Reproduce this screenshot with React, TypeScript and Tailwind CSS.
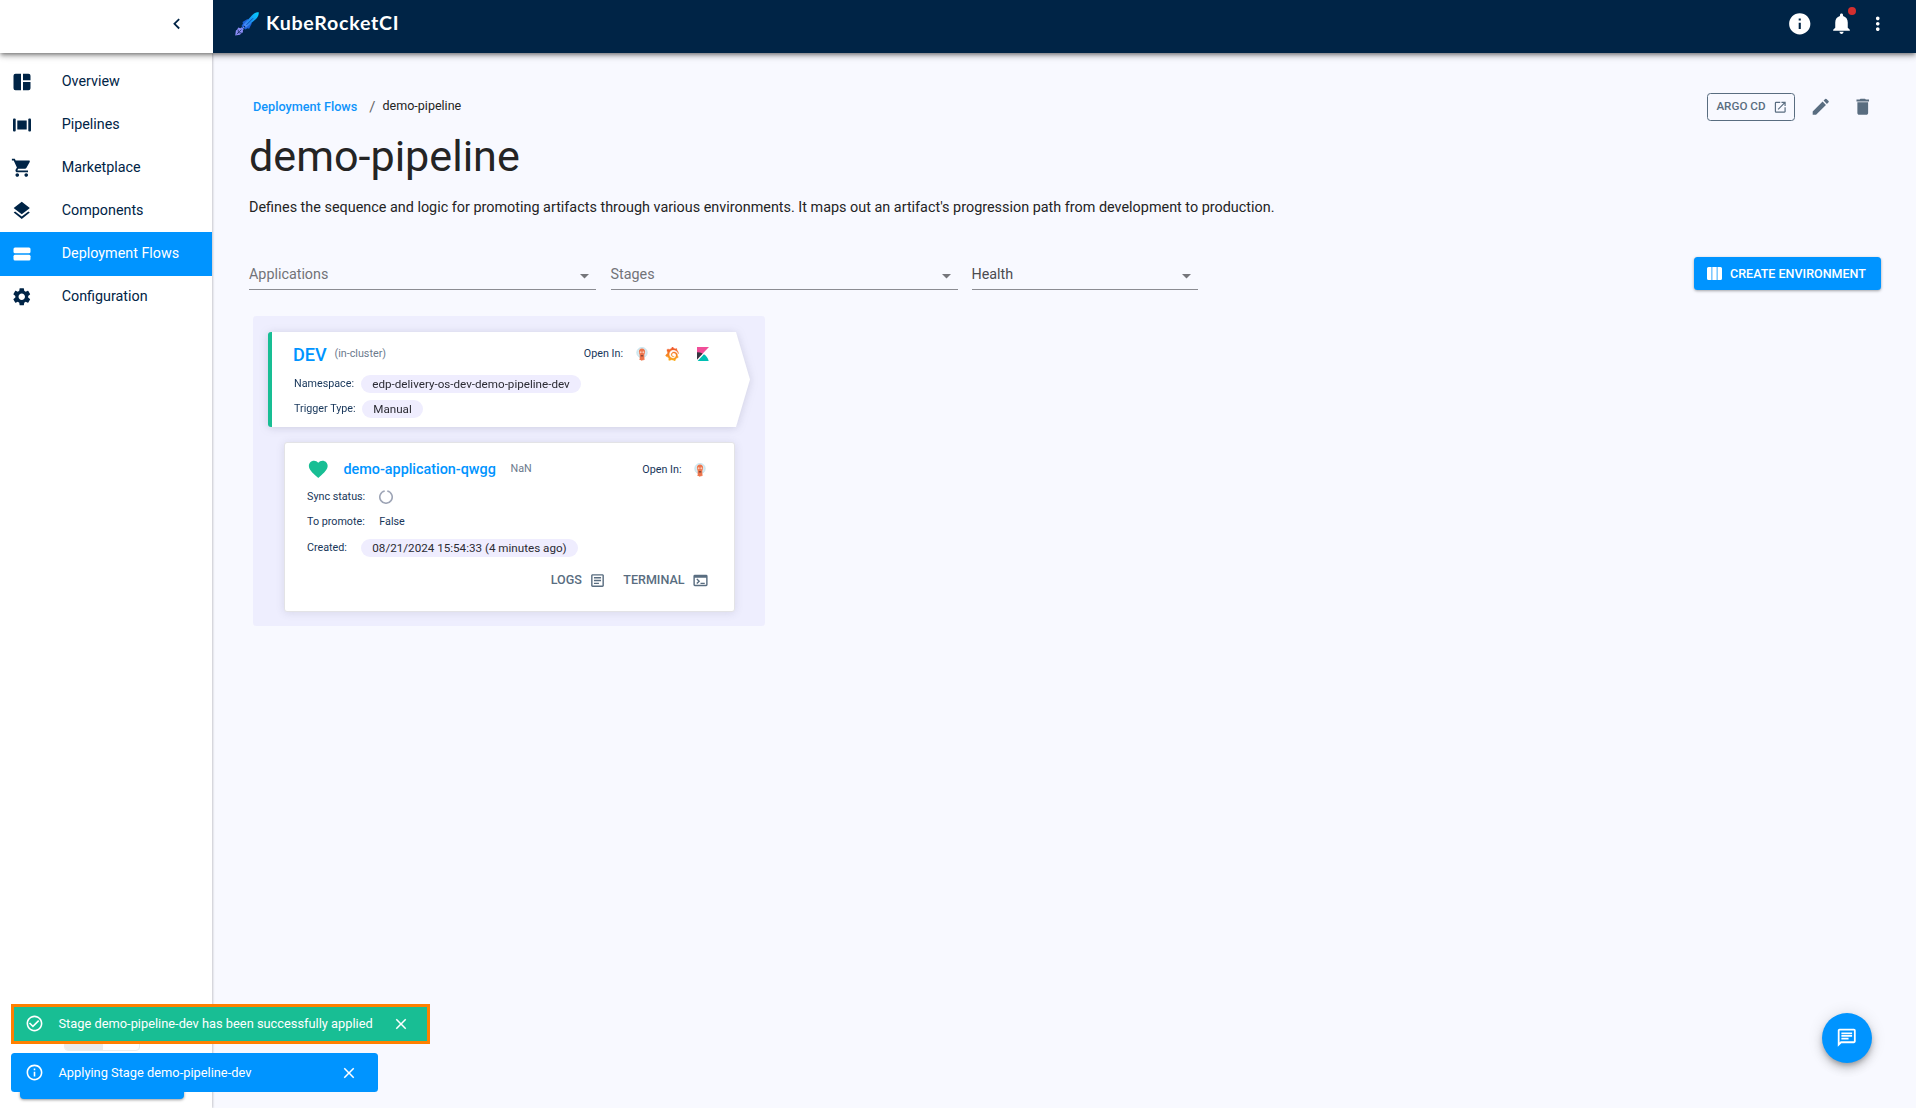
import type { ReactNode } from "react";
import {
  MdCheckCircleOutline,
  MdChevronLeft,
  MdClose,
  MdDelete,
  MdEdit,
  MdFavorite,
  MdInfo,
  MdInfoOutline,
  MdLayers,
  MdMoreVert,
  MdNotifications,
  MdOpenInNew,
  MdOutlineArticle,
  MdOutlineChat,
  MdOutlineTerminal,
  MdSettings,
  MdShoppingCart,
} from "react-icons/md";
import { SiGrafana } from "react-icons/si";

function DashboardIcon() {
  return (
    <svg width="18" height="18" viewBox="0 0 18 18" fill="currentColor">
      <path d="M2.5 .7H8v16.6H2.5a2 2 0 0 1-2-2V2.700a2 2 0 0 1 2-2zM10 .7h5.500a2 2 0 0 1 2 2V7.300H10zM10 9h7.500v6.300a2 2 0 0 1-2 2H10z" />
    </svg>
  );
}

function PipelineIcon() {
  return (
    <svg width="18" height="14" viewBox="0 0 18 14" fill="currentColor">
      <rect x="0" y=".5" width="2.700" height="13" rx="1" />
      <rect x="4.300" y="2.500" width="9.400" height="9" />
      <rect x="15.300" y=".5" width="2.700" height="13" rx="1" />
    </svg>
  );
}

function FlowsIcon() {
  return (
    <svg width="18" height="14" viewBox="0 0 18 14" fill="currentColor">
      <rect x=".5" y=".4" width="17" height="5.800" rx="1.500" />
      <rect x=".5" y="7.800" width="17" height="5.800" rx="1.500" />
    </svg>
  );
}

function ColumnsIcon() {
  return (
    <svg width="15" height="13" viewBox="0 0 15 13" fill="currentColor">
      <path d="M1.500 0H4.500v13H1.500A1.500 1.500 0 0 1 0 11.500v-10A1.500 1.500 0 0 1 1.500 0zM5.300 0h4.400v13H5.300zM10.500 0h3A1.500 1.500 0 0 1 15 1.500v10a1.500 1.500 0 0 1-1.500 1.500h-3z" />
    </svg>
  );
}

function RocketLogo() {
  return (
    <svg width="24" height="24" viewBox="0 0 24 24">
      <defs>
        <linearGradient id="rocket" x1="0" y1="1" x2="1" y2="0">
          <stop offset="0" stopColor="#5f86f5" />
          <stop offset=".4" stopColor="#1f8cf0" />
          <stop offset="1" stopColor="#00d4ff" />
        </linearGradient>
      </defs>
      <path d="M10 8.500l2.500-1.500 1.500 1.500-6 7-1.500-1.500 1.500-2.500-.5-1.500zM15.500 14l1.300-2.500-1.500-1.500-6.500 6 1.500 1.500 2.300-1.300 1.500.6z" fill="#1c62d8" />
      <path d="M23.800.2c0 2.700-.9 4.800-2.800 6.700l-9.900 8.700-2.700-2.800L17.300 3.100C19.200 1.100 21.100 .2 23.800.2z" fill="url(#rocket)" />
      <path d="M11.500 12.800l6.500-6.500" stroke="#0b4fae" strokeWidth="1" />
      <path d="M6.400 15.300l2.300 2.300-.9.900.2 1.800-2 1.200-1 1.200-4.800.8.700-5 1.400-1 .9-2 2.300.7z" fill="#8b8df6" />
      <path d="M6 18l3-3" stroke="#6f8bf8" strokeWidth="1.300" />
      <path d="M1.800 22.200l4.500-4.500M3.300 17.800v3h3.200" stroke="#1b2f66" strokeWidth=".8" fill="none" />
    </svg>
  );
}

function ArgoIcon() {
  return (
    <svg width="12" height="14" viewBox="0 0 12 14">
      <circle cx="6" cy="5.600" r="5.200" fill="#d9ecf3" stroke="#b9dce8" strokeWidth=".7" />
      <path d="M6 1.500c2 0 3.100 1.400 3.100 3.200 0 1.300-.7 2.300-.8 3.200v3.500l.9.8-1.500.5-.6.900-.9-.4-.9.600-.7-.8-1.500-.3.600-.8V7.900c-.1-.9-.8-1.900-.8-3.200C2.900 2.900 4 1.500 6 1.500z" fill="#ee754c" />
      <circle cx="4.600" cy="5.200" r="1" fill="#f9c9b6" />
      <circle cx="7.400" cy="5.200" r="1" fill="#f9c9b6" />
      <path d="M4.800 8h2.400v1.600H4.800z" fill="#8c4a3c" />
    </svg>
  );
}

function GrafanaIcon() {
  return (
    <span className="flex">
      <svg width="0" height="0">
        <defs>
          <linearGradient id="grafana" x1="0" y1="0" x2="0" y2="1">
            <stop offset="0" stopColor="#ee4f2b" />
            <stop offset="1" stopColor="#fcb01b" />
          </linearGradient>
        </defs>
      </svg>
      <SiGrafana size={14} fill="url(#grafana)" stroke="url(#grafana)" strokeWidth={0.6} />
    </span>
  );
}

function KibanaIcon() {
  return (
    <svg width="12" height="14" viewBox="4 0 25 32" preserveAspectRatio="none">
      <path d="M4 0v28.789L28.935.017z" fill="#f04e98" />
      <path d="M4 12v16.789l11.906-13.738A24.721 24.721 0 004 12" fill="#343741" />
      <path d="M18.479 16.664L6.268 30.754l-1.073 1.237h23.191c-1.272-6.210-4.890-11.559-9.907-15.327" fill="#00bfb3" />
    </svg>
  );
}

function SyncIcon() {
  return (
    <svg width="14" height="14" viewBox="0 0 14 14" fill="none" stroke="#9ea5b6" strokeWidth="1.600">
      <path d="M8.300 .95a6.200 6.200 0 1 1-2.600 0" />
    </svg>
  );
}

const NAV: { label: string; icon: ReactNode; active?: boolean }[] = [
  { label: "Overview", icon: <DashboardIcon /> },
  { label: "Pipelines", icon: <PipelineIcon /> },
  { label: "Marketplace", icon: <MdShoppingCart size={21.500} /> },
  { label: "Components", icon: <MdLayers size={21.500} /> },
  { label: "Deployment Flows", icon: <FlowsIcon />, active: true },
  { label: "Configuration", icon: <MdSettings size={21.500} /> },
];

function Sidebar() {
  return (
    <aside className="flex w-[212px] shrink-0 flex-col bg-white pt-[7px] shadow-[1px_0_2px_rgba(0,0,0,0.2)]">
      {NAV.map((item) => (
        <div
          key={item.label}
          className={
            item.active
              ? "-mb-px flex h-11 items-center bg-[#0094ff] pb-px text-white"
              : "flex h-[43px] items-center text-[#002446]"
          }
        >
          <span className="ml-[9px] flex w-[26px] justify-center">{item.icon}</span>
          <span className={item.active ? "ml-[26.700px] text-[14.330px]" : "ml-[26.700px] pt-px text-[14.330px]"}>
            {item.label}
          </span>
        </div>
      ))}
      <div className="mt-auto flex flex-col px-5 pb-[9px]">
        <div className="mx-11 flex h-8 w-[76px] overflow-hidden rounded border border-[#ececec]">
          <div className="w-[38px] bg-[#ebebeb]" />
        </div>
        <div className="mt-4 h-8 w-[164px] rounded bg-[#0094ff] shadow-[0_1px_3px_rgba(0,0,0,0.4)]" />
      </div>
    </aside>
  );
}

function Header() {
  return (
    <header className="z-10 flex h-[53px] shrink-0 shadow-[0_2px_4px_-1px_rgba(0,0,0,0.45),0_4px_5px_rgba(0,0,0,0.14),0_1px_10px_rgba(0,0,0,0.12)]">
      <div className="flex w-[213px] justify-end bg-white pt-[13px] pr-[26px] text-[#002446]">
        <MdChevronLeft size={21.500} />
      </div>
      <div className="flex grow items-start bg-[#002446] pl-[22px] text-white">
        <span className="mt-[11.500px]">
          <RocketLogo />
        </span>
        <span className="mt-[9px] ml-[7px] font-[Lato] text-[19.600px] leading-[28px] font-bold tracking-[0.750px]">
          KubeRocketCI
        </span>
        <div className="mr-[28px] ml-auto flex h-[47px] items-center">
          <MdInfo size={25.500} />
          <span className="relative ml-[16.500px]">
            <MdNotifications size={25} />
            <span className="absolute -top-[4px] right-[-2.500px] size-2 rounded-full bg-[#d32f2f]" />
          </span>
          <MdMoreVert size={21.500} className="ml-[13px]" />
        </div>
      </div>
    </header>
  );
}

function Select({ label, className }: { label: string; className: string }) {
  return (
    <div className={`flex h-[33px] items-center justify-between border-b border-[#8b8c92] pt-[3px] text-[14.330px] ${className}`}>
      <span>{label}</span>
      <svg className="mt-[3px] mr-[7px]" width="9" height="5" viewBox="0 0 9 5">
        <path d="M0 0h9L4.500 4.500z" fill="#75767b" />
      </svg>
    </div>
  );
}

function Chip({ children, className }: { children: ReactNode; className: string }) {
  return (
    <span className={`flex h-[18px] items-center justify-center rounded-full bg-[#efedfe] pt-0.5 text-[11.650px] text-[#2b2b33] ${className}`}>
      {children}
    </span>
  );
}

function StageCard() {
  return (
    <div className="ml-[15px] w-[482px] drop-shadow-[0_1px_4px_rgba(80,80,110,0.2)]">
      <div className="h-[95px] rounded-l-[3px] border-l-4 border-[#18be94] bg-white pt-2.5 pl-[22px] text-[10.750px] text-[#17365a] [clip-path:polygon(0_0,468px_0,100%_50%,468px_100%,0_100%)]">
        <div className="flex h-6 items-center pr-[41px]">
          <span className="-ml-px w-[41.500px] pt-0.5 text-[18.100px] font-medium text-[#0094ff]">DEV</span>
          <span className="pt-px text-[#6c7a8d]">(in-cluster)</span>
          <span className="mr-[13px] ml-auto pt-px">Open In:</span>
          <ArgoIcon />
          <span className="ml-[17px]">
            <GrafanaIcon />
          </span>
          <span className="ml-[18px]">
            <KibanaIcon />
          </span>
        </div>
        <div className="mt-[9px] flex h-[18px] items-center">
          <span className="w-[67px]">Namespace:</span>
          <Chip className="w-[220px]">edp-delivery-os-dev-demo-pipeline-dev</Chip>
        </div>
        <div className="mt-[7px] flex h-[18px] items-center">
          <span className="w-[68px]">Trigger Type:</span>
          <Chip className="w-[61px]">Manual</Chip>
        </div>
      </div>
    </div>
  );
}

function ApplicationCard() {
  return (
    <div className="mt-[15px] ml-[31px] h-[170px] w-[451px] rounded-[3px] border border-[#e3e3e6] bg-white pt-[15px] pl-[22px] text-[10.750px] text-[#17365a] shadow-[0_1px_8px_rgba(80,80,110,0.14)]">
      <div className="flex h-[23px] items-center pr-[28px]">
        <MdFavorite size={22.500} className="text-[#18be94]" />
        <span className="ml-[14px] w-[167px] text-[14.370px] font-medium text-[#0094ff]">
          demo-application-qwgg
        </span>
        <span className="mb-px text-[#6c7a8d]">NaN</span>
        <span className="mr-[12.500px] ml-auto pt-0.5">Open In:</span>
        <ArgoIcon />
      </div>
      <div className="mt-[9px] flex h-3.5 items-center">
        <span className="w-[72.300px]">Sync status:</span>
        <SyncIcon />
      </div>
      <div className="mt-2.5 flex h-3.5 items-center pt-0.5">
        <span className="w-[72.300px]">To promote:</span>
        <span>False</span>
      </div>
      <div className="mt-[11px] flex h-[18px] items-center">
        <span className="w-[54px]">Created:</span>
        <Chip className="w-[217px]">08/21/2024 15:54:33 (4 minutes ago)</Chip>
      </div>
      <div className="mt-[14px] flex h-[18px] items-center justify-end pr-[25.500px] text-[12.540px] font-medium text-[#596d80]">
        <span className="mr-[7px]">LOGS</span>
        <MdOutlineArticle size={17} />
        <span className="mr-[7px] ml-[17.500px]">TERMINAL</span>
        <MdOutlineTerminal size={17} />
      </div>
    </div>
  );
}

export default function App() {
  return (
    <div className="relative flex h-[1108px] w-[1916px] flex-col overflow-hidden bg-[#f8f9ff] font-[Roboto,sans-serif]">
      <Header />
      <div className="flex grow">
        <Sidebar />
        <main className="flex grow flex-col pt-10 pr-[35px] pl-[37px] text-[#242424]">
          <div className="flex h-7 items-center text-[12.540px]">
            <span className="ml-[4px] text-[12.680px] font-medium text-[#0f94fb]">Deployment Flows</span>
            <span className="ml-3 text-[15px] leading-4 text-[#666]">/</span>
            <span className="mb-0.5 ml-[7px]">demo-pipeline</span>
            <div className="ml-auto flex items-center pr-[7.500px] text-[#596d80]">
              <div className="flex h-7 w-[88px] items-center justify-center rounded-[3.500px] border border-[#596d80] text-[11.650px] font-medium">
                <span className="mr-[7px] ml-px">ARGO CD</span>
                <MdOpenInNew size={14.500} />
              </div>
              <MdEdit size={21.500} className="ml-[14.500px]" />
              <MdDelete size={21.500} className="ml-[20.800px]" />
            </div>
          </div>
          <h1 className="mt-[11px] text-[43.100px] leading-[50px]">demo-pipeline</h1>
          <p className="mt-4 text-[14.400px] leading-5">
            Defines the sequence and logic for promoting artifacts through various environments. It maps out an
            artifact's progression path from development to production.
          </p>
          <div className="mt-[39px] flex items-start">
            <Select label="Applications" className="w-[347px] text-[#727378]" />
            <Select label="Stages" className="ml-[14.500px] w-[347px] text-[#727378]" />
            <Select label="Health" className="ml-[14px] w-[226px] text-[#4b4b50]" />
            <div className="ml-auto flex h-[33px] w-[187px] items-center rounded-[3.500px] bg-[#0094ff] pl-[12.500px] text-[12.540px] font-medium text-white shadow-[0_1px_3px_rgba(0,0,0,0.35)]">
              <ColumnsIcon />
              <span className="ml-[8.500px] pt-px">CREATE ENVIRONMENT</span>
            </div>
          </div>
          <section className="mt-[26px] ml-1 h-[310px] w-[512px] rounded-[3.500px] bg-[#eeeefe] pt-4">
            <StageCard />
            <ApplicationCard />
          </section>
        </main>
      </div>

      <div className="absolute bottom-4 left-[11px] z-20 flex flex-col items-start gap-[9px] text-[12.830px] text-white">
        <div className="flex h-10 w-[419px] items-center border-3 border-[#ff8000] bg-[#18be94] pb-px pl-[11px]">
          <MdCheckCircleOutline size={19} />
          <span className="ml-[14.500px]">Stage demo-pipeline-dev has been successfully applied</span>
          <MdClose size={18} className="mr-[17px] ml-auto" />
        </div>
        <div className="flex h-[39px] w-[367px] items-center rounded-[3.500px] bg-[#0094ff] pl-[14px]">
          <MdInfoOutline size={19} />
          <span className="ml-[14.500px]">Applying Stage demo-pipeline-dev</span>
          <MdClose size={18} className="mr-[20px] ml-auto" />
        </div>
      </div>

      <div className="absolute right-11 bottom-[45px] flex size-[50px] items-center justify-center rounded-full bg-[#0094ff] text-white shadow-[0_3px_5px_-1px_rgba(0,0,0,0.25),0_6px_10px_rgba(0,0,0,0.14),0_1px_16px_rgba(0,0,0,0.12)]">
        <MdOutlineChat size={21.500} />
      </div>
    </div>
  );
}
